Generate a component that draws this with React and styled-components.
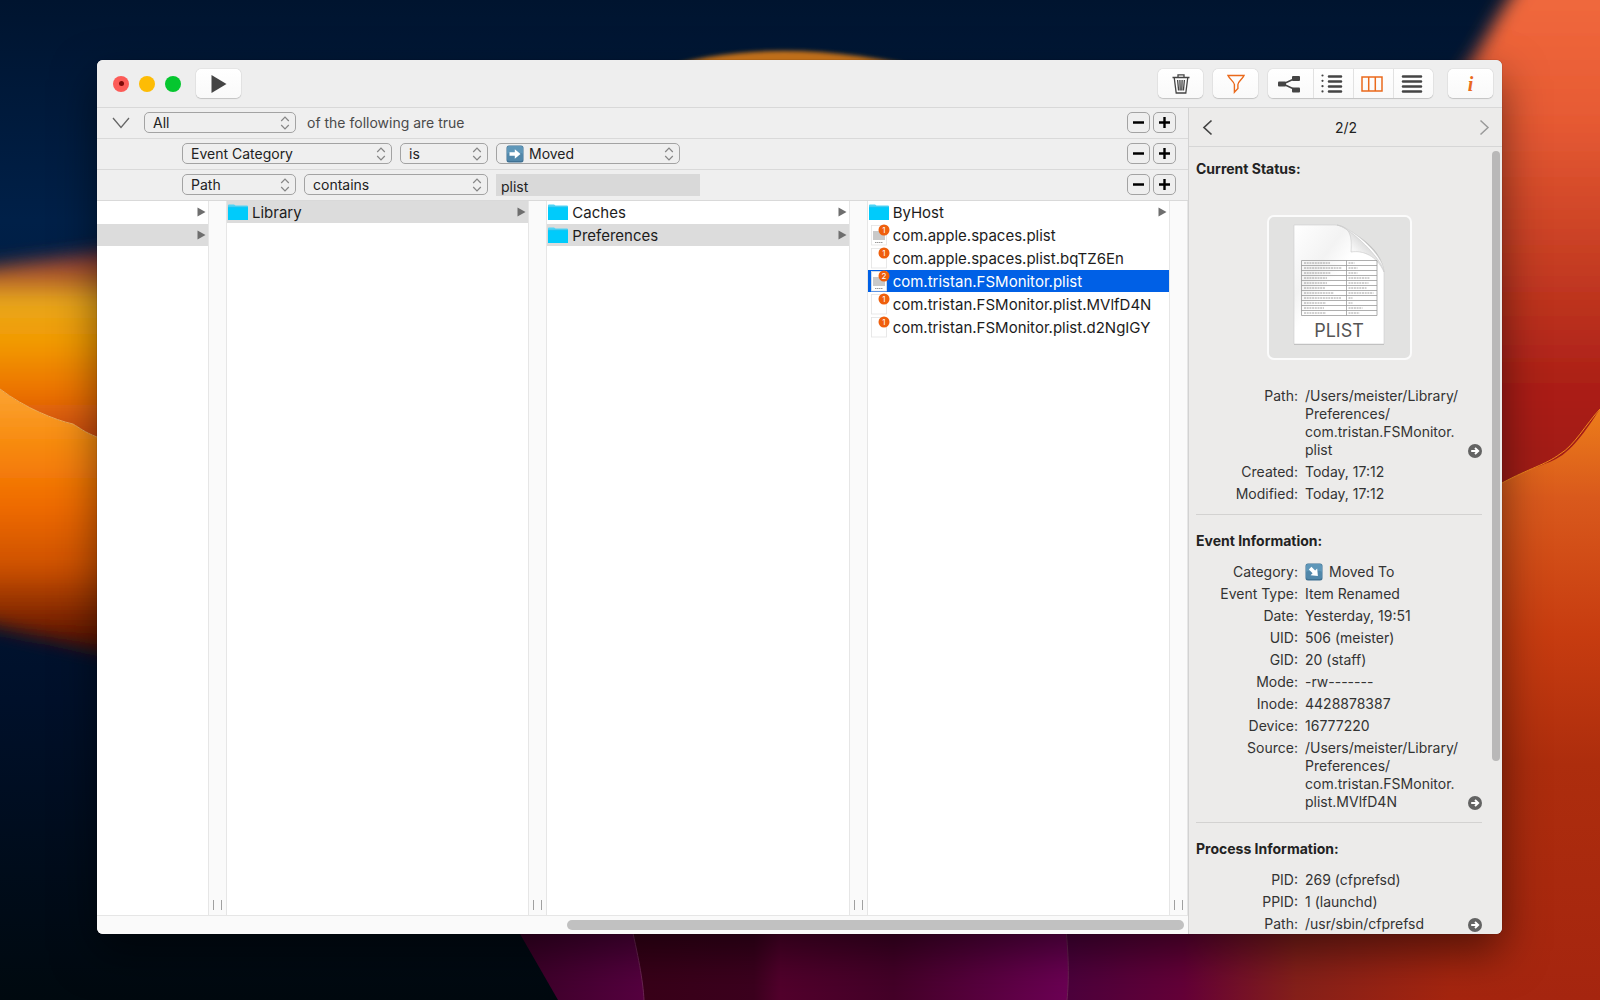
import React from 'react';
import styled, { createGlobalStyle } from 'styled-components';

const GlobalStyle = createGlobalStyle`
  * {
    box-sizing: border-box;
  }
  body {
    margin: 0;
    background: #00122b;
    color: #222;
    font-family: Inter, "Liberation Sans", sans-serif;
    font-size: 14px;
  }
  button, input, select {
    margin: 0;
    padding: 0;
    border: 0;
    background: none;
    color: inherit;
    font: inherit;
  }
  svg {
    display: block;
    flex: none;
  }
`;

const Desktop = styled.div`
  position: relative;
  display: flex;
  height: 100vh;
  min-height: 480px;
  padding: 60px 98px 66px 97px;
`;

const Wallpaper = styled.svg`
  position: absolute;
  inset: 0;
  width: 100%;
  height: 100%;
`;

const Window = styled.main`
  position: relative;
  display: flex;
  flex: 1;
  flex-direction: column;
  min-width: 0;
  overflow: hidden;
  border-radius: 6px;
  background: #efefef;
  box-shadow: 0 0 1px rgba(0, 0, 0, 0.6), 0 18px 44px rgba(0, 0, 0, 0.5);
`;

const Toolbar = styled.header`
  display: flex;
  flex: none;
  align-items: center;
  height: 48px;
  padding: 0 9px 0 16px;
  border-bottom: 1px solid #d8d8d8;
  background: #eeeeee;
`;

const Lights = styled.div`
  display: flex;
  gap: 10px;
  margin-right: 15px;
`;

const Light = styled.button`
  display: flex;
  align-items: center;
  justify-content: center;
  width: 16px;
  height: 16px;
  border-radius: 50%;
  background: ${(props) => props.$color};

  &::after {
    content: '';
    width: 5px;
    height: 5px;
    border-radius: 50%;
    background: ${(props) => (props.$edited ? '#7d0a08' : 'transparent')};
  }
`;

const ToolButton = styled.button`
  display: flex;
  align-items: center;
  justify-content: center;
  width: ${(props) => (props.$narrow ? 40 : 45)}px;
  height: 29px;
  border-radius: 5px;
  background: linear-gradient(#fff, #f9f9f9);
  box-shadow: 0 0 1px rgba(0, 0, 0, 0.35), 0 1px 1px rgba(0, 0, 0, 0.15);
  color: ${(props) => (props.$active ? '#ea6a1c' : '#444')};
`;

const Tools = styled.div`
  display: flex;
  gap: 10px;
  margin-left: auto;
`;

const Segments = styled.div`
  display: flex;
  margin-right: 5px;
  border-radius: 5px;
  box-shadow: 0 0 1px rgba(0, 0, 0, 0.35), 0 1px 1px rgba(0, 0, 0, 0.15);

  ${ToolButton} {
    padding-right: 3px;
    border-radius: 0;
    border-left: 1px solid #e2e2e2;
    box-shadow: none;
  }
  ${ToolButton}:first-child {
    border-left: 0;
    border-radius: 5px 0 0 5px;
  }
  ${ToolButton}:last-child {
    border-radius: 0 5px 5px 0;
  }
`;

const InfoGlyph = styled.span`
  font-family: "Liberation Serif", serif;
  font-size: 20px;
  font-style: italic;
  font-weight: bold;
  line-height: 20px;
`;

const Body = styled.div`
  display: flex;
  flex: 1;
  min-height: 0;
`;

const Main = styled.section`
  display: flex;
  flex: 1;
  flex-direction: column;
  min-width: 0;
`;

const Rule = styled.div`
  display: flex;
  flex: none;
  align-items: center;
  gap: 8px;
  height: 31px;
  padding: 0 12px 1px ${(props) => (props.$nested ? 85 : 15)}px;
  border-bottom: 1px solid #d9d9d9;
`;

const Disclosure = styled.button`
  width: 24px;
  color: #666;
`;

const Phrase = styled.span`
  padding-left: 3px;
  color: #4a4a4a;
`;

const Popup = styled.label`
  display: grid;
  align-items: center;
  width: ${(props) => props.$width}px;
  height: 21px;

  & > * {
    grid-area: 1 / 1;
  }
  & > svg {
    pointer-events: none;
  }
  & > svg:last-child {
    justify-self: end;
    margin-right: 6px;
  }
  & > svg:not(:last-child) {
    margin-left: 10px;
  }
`;

const Select = styled.select`
  width: 100%;
  height: 21px;
  padding-left: ${(props) => (props.$icon ? 32 : 8)}px;
  border: 1px solid #a3a3a3;
  border-radius: 5px;
  appearance: none;
  line-height: 19px;
`;

const TextField = styled.input`
  width: 204px;
  height: 22px;
  padding: 4px 5px 0;
  border-radius: 0;
  background: #d9d9d9;
`;

const RuleButtons = styled.div`
  display: flex;
  gap: 3px;
  margin-left: auto;
`;

const RuleButton = styled.button`
  display: flex;
  align-items: center;
  justify-content: center;
  width: 23px;
  height: 21px;
  border: 1px solid #a3a3a3;
  border-radius: 5px;
  color: #000;
`;

const Browser = styled.div`
  display: flex;
  flex: 1;
  min-height: 0;
  overflow: hidden;
  background: #fff;
`;

const Column = styled.ul`
  display: flex;
  flex: ${(props) => (props.$first ? '0 0 111px' : '1 1 0')};
  flex-direction: column;
  gap: 1px;
  min-width: 0;
  margin: 0;
  padding: 0;
  list-style: none;
`;

const Entry = styled.button`
  display: flex;
  align-items: center;
  width: 100%;
  height: 22px;
  padding-right: 2px;
  background: ${(props) => (props.$state === 'open' ? '#dcdcdc' : props.$state === 'selected' ? '#0060e6' : 'none')};
  color: ${(props) => (props.$state === 'selected' ? '#fff' : '#1c1c1c')};
  font-size: 15px;
  line-height: 22px;
  text-align: left;
  white-space: nowrap;

  & > svg:last-child {
    margin-left: auto;
  }
`;

const EntryName = styled.span`
  padding: 1px 0 0 1px;
`;

const Gutter = styled.div`
  display: flex;
  flex: none;
  align-items: flex-end;
  justify-content: center;
  width: 19px;
  padding-bottom: 5px;
  border: solid #e6e6e6;
  border-width: 0 1px;
  background: #fafafa;

  &::after {
    content: '';
    width: 7px;
    height: 10px;
    border: solid #a0a0a0;
    border-width: 0 1px;
  }
`;

const BottomTrack = styled.div`
  display: flex;
  flex: none;
  justify-content: flex-end;
  height: 19px;
  padding: 4px 4px 0;
  border-top: 1px solid #e6e6e6;
  background: #fafafa;
`;

const BottomThumb = styled.div`
  width: 57%;
  height: 10px;
  border-radius: 5px;
  background: #c1c1c1;
`;

const Inspector = styled.aside`
  display: flex;
  flex: 0 0 314px;
  flex-direction: column;
  border-left: 1px solid #d2d2d2;
  background: #ecebea;
`;

const Pager = styled.nav`
  display: flex;
  flex: none;
  align-items: center;
  justify-content: space-between;
  height: 39px;
  padding: 0 12px 0 13px;
  border-bottom: 1px solid #d6d6d6;
`;

const PagerButton = styled.button`
  color: ${(props) => (props.disabled ? '#9a9a9a' : '#444')};
`;

const Scroller = styled.div`
  display: flex;
  flex: 1;
  min-height: 0;
  overflow: hidden;
`;

const Details = styled.div`
  flex: 1;
  min-width: 0;
  padding: 12px 10px 0 7px;
`;

const SideThumb = styled.div`
  flex: none;
  width: 8px;
  height: 77.5%;
  margin: 4px 2px 0 0;
  border-radius: 4px;
  background: #b9b8b8;
`;

const Heading = styled.h2`
  margin: 0;
  font-size: 14px;
  font-weight: 700;
  line-height: 20px;
`;

const Preview = styled.div`
  display: flex;
  align-items: center;
  justify-content: center;
  width: 145px;
  height: 145px;
  margin: 36px auto 27px;
  padding-bottom: 5px;
  border: 2px solid #fbfbfb;
  border-radius: 7px;
  background: #e2e2e1;
`;

const Facts = styled.dl`
  display: grid;
  grid-template-columns: 102px 1fr auto;
  row-gap: 4px;
  margin: ${(props) => (props.$spaced ? 12 : 0)}px 0 0;
  line-height: 18px;
`;

const Label = styled.dt`
  grid-column: 1;
  text-align: right;
  color: #333;
`;

const Value = styled.dd`
  display: flex;
  grid-column: 2;
  align-items: center;
  gap: 6px;
  margin: 0 0 0 7px;
  color: #333;
  white-space: pre-line;
`;

const Reveal = styled.button`
  grid-column: 3;
  align-self: end;
  height: 17px;
`;

const Divider = styled.hr`
  margin: 11px 0 16px;
  border: 0;
  border-top: 1px solid #d3d2d1;
`;

function Background() {
  return (
    <Wallpaper viewBox="0 0 1600 1000" preserveAspectRatio="none" aria-hidden="true">
      <defs>
        <linearGradient id="night" x1="0" y1="0" x2="0" y2="1">
          <stop offset="0" stopColor="#00142f" />
          <stop offset="0.22" stopColor="#002048" />
          <stop offset="0.7" stopColor="#00102a" />
          <stop offset="1" stopColor="#00090f" />
        </linearGradient>
        <linearGradient id="gold" x1="0" y1="250" x2="0" y2="435" gradientUnits="userSpaceOnUse">
          <stop offset="0" stopColor="#7a3040" />
          <stop offset="0.12" stopColor="#a8502c" />
          <stop offset="0.28" stopColor="#e8a81c" />
          <stop offset="0.5" stopColor="#f39a00" />
          <stop offset="0.8" stopColor="#ea6d04" />
          <stop offset="1" stopColor="#c94a10" />
        </linearGradient>
        <linearGradient id="amber" x1="0" y1="390" x2="0" y2="640" gradientUnits="userSpaceOnUse">
          <stop offset="0" stopColor="#fba332" />
          <stop offset="0.2" stopColor="#f88c10" />
          <stop offset="0.45" stopColor="#f06c00" />
          <stop offset="0.7" stopColor="#cf5200" />
          <stop offset="1" stopColor="#5c1206" />
        </linearGradient>
        <linearGradient id="coral" x1="0" y1="0" x2="0" y2="480" gradientUnits="userSpaceOnUse">
          <stop offset="0" stopColor="#f0683c" />
          <stop offset="0.25" stopColor="#e65a33" />
          <stop offset="0.55" stopColor="#c53c22" />
          <stop offset="0.8" stopColor="#ab1f17" />
          <stop offset="1" stopColor="#a01c17" />
        </linearGradient>
        <linearGradient id="rust" x1="0" y1="410" x2="0" y2="1000" gradientUnits="userSpaceOnUse">
          <stop offset="0" stopColor="#ec7c1a" />
          <stop offset="0.15" stopColor="#d9591c" />
          <stop offset="0.38" stopColor="#c73c10" />
          <stop offset="0.6" stopColor="#ad2d0d" />
          <stop offset="1" stopColor="#a5250f" />
        </linearGradient>
        <linearGradient id="wine" x1="515" y1="0" x2="645" y2="0" gradientUnits="userSpaceOnUse">
          <stop offset="0" stopColor="#3a0026" />
          <stop offset="1" stopColor="#560040" />
        </linearGradient>
        <linearGradient id="berry" x1="632" y1="0" x2="1068" y2="0" gradientUnits="userSpaceOnUse">
          <stop offset="0" stopColor="#380018" />
          <stop offset="0.28" stopColor="#3c001e" />
          <stop offset="0.34" stopColor="#52002c" />
          <stop offset="0.6" stopColor="#440028" />
          <stop offset="1" stopColor="#6c0054" />
        </linearGradient>
        <linearGradient id="ember" x1="1066" y1="0" x2="1450" y2="0" gradientUnits="userSpaceOnUse">
          <stop offset="0" stopColor="#4c003c" />
          <stop offset="0.3" stopColor="#640038" />
          <stop offset="0.6" stopColor="#86201a" />
          <stop offset="1" stopColor="#a5250f" />
        </linearGradient>
        <filter id="soft" x="-20%" y="-20%" width="140%" height="140%">
          <feGaussianBlur stdDeviation="9" />
        </filter>
        <filter id="haze" x="-10%" y="-50%" width="120%" height="200%">
          <feGaussianBlur stdDeviation="2" />
        </filter>
        <clipPath id="upperDune">
          <path d="M0 200H200V480L97 437C84 432 80 428 73 424C55 420 25 408 0 389Z" />
        </clipPath>
        <clipPath id="lowerDune">
          <path d="M0 389C25 408 55 420 73 424C80 428 84 432 97 437L200 480V800H0Z" />
        </clipPath>
      </defs>
      <rect width="1600" height="1000" fill="url(#night)" />
      <g clipPath="url(#upperDune)">
        <path d="M-40 272C20 262 60 258 140 246V500H-40Z" fill="url(#gold)" filter="url(#soft)" />
      </g>
      <g clipPath="url(#lowerDune)">
        <path d="M-40 350H180V668C120 654 60 644 -40 616Z" fill="url(#amber)" filter="url(#soft)" />
      </g>
      <path d="M0 389C25 408 55 420 73 424C80 428 84 432 97 437" fill="none" stroke="#f5ad55" />
      <path d="M650 72C730 44 830 44 940 72Z" fill="#d0781c" filter="url(#haze)" />
      <path d="M1440 100C1480 60 1490 20 1530 -30H1650V520H1440Z" fill="url(#coral)" filter="url(#soft)" />
      <path d="M512 920L558 1000H660V920Z" fill="url(#wine)" />
      <path d="M630 920C638 955 643 980 644 1000H1080V920Z" fill="url(#berry)" />
      <path d="M1065 920C1069 955 1069 980 1067 1000H1460V920Z" fill="url(#ember)" />
      <path d="M630 920C638 955 643 980 644 1000M1065 920C1069 955 1069 980 1067 1000" fill="none" stroke="#6b2452" />
      <path d="M1450 506L1502 483C1530 468 1545 465 1556 459C1574 450 1590 424 1600 409V1000H1450Z" fill="url(#rust)" />
      <path d="M1502 483C1530 468 1545 465 1560 454C1574 446 1586 424 1600 409" fill="none" stroke="#f08a1c" />
    </Wallpaper>
  );
}

function Chevrons() {
  return (
    <svg width="10" height="14" viewBox="0 0 10 14" fill="none" stroke="#858585" strokeWidth="1.2">
      <path d="M1.2 5L5 1.2 8.8 5M1.2 9L5 12.8 8.8 9" />
    </svg>
  );
}

function ArrowTile({ angle = 0 }) {
  return (
    <svg width="18" height="18" viewBox="0 0 18 18">
      <rect x="0.5" y="0.5" width="17" height="17" rx="2.5" fill="#3f7193" />
      <rect x="1" y="1" width="16" height="14" rx="2" fill="#5f97b9" />
      <rect x="1" y="8" width="16" height="8" rx="2" fill="#5187aa" />
      <path d="M3.5 7.2H8.8V4.3L14.5 9 8.8 13.7V10.8H3.5Z" fill="#fff" transform={`rotate(${angle} 9 9)`} />
    </svg>
  );
}

function FolderIcon() {
  return (
    <svg width="24" height="22" viewBox="0 0 24 22">
      <path d="M1 4.5Q1 3.5 2 3.5H7L8.5 4.5H20Q21 4.5 21 5.5V8H1Z" fill="#4fd5f7" />
      <rect x="1" y="6" width="20" height="13" rx="0.5" fill="#00cbfb" />
      <path d="M1 6H21" stroke="#35bfe6" strokeWidth="0.6" />
    </svg>
  );
}

function FileIcon({ count, plist }) {
  return (
    <svg width="24" height="22" viewBox="0 0 24 22">
      <rect x="3.5" y="1.5" width="15" height="19.5" fill="#fff" stroke="#e3e3e3" strokeWidth="0.8" />
      {plist && <path d="M5 7H17V16H5Z" fill="#c9c9c9" />}
      {plist && <path d="M7 18.5H15" stroke="#9a9a9a" strokeDasharray="1.5 0.5" />}
      <circle cx="16" cy="6" r="5.5" fill="#ef5f0c" />
      <text x="16" y="9" textAnchor="middle" fontSize="8" fill="#fff">
        {count}
      </text>
    </svg>
  );
}

function Triangle() {
  return (
    <svg width="9" height="10" viewBox="0 0 9 10">
      <path d="M0.5 0.5L8.5 5 0.5 9.5Z" fill="#6e6e6e" />
    </svg>
  );
}

function RevealIcon() {
  return (
    <svg width="14" height="14" viewBox="0 0 14 14">
      <circle cx="7" cy="7" r="7" fill="#636363" />
      <path d="M3.2 7H9.5M7 4L10.2 7 7 10" fill="none" stroke="#fff" strokeWidth="1.9" />
    </svg>
  );
}

// dash lengths of the key and the value in each line of the document
const plistRows = [
  [26, 6], [38, 9], [27, 9], [23, 21], [23, 20], [21, 18], [30, 25], [37, 4], [22, 4], [20, 14], [22, 11],
];

function PlistDocument() {
  return (
    <svg width="96" height="122" viewBox="0 2 96 122">
      <defs>
        <linearGradient id="paper" x1="0" y1="0" x2="1" y2="1">
          <stop offset="0" stopColor="#fff" />
          <stop offset="0.3" stopColor="#f3f3f3" />
          <stop offset="0.45" stopColor="#fff" />
        </linearGradient>
        <linearGradient id="curl" x1="0" y1="1" x2="0.7" y2="0.3">
          <stop offset="0" stopColor="#fff" />
          <stop offset="0.6" stopColor="#f6f6f6" />
          <stop offset="1" stopColor="#cfcfcf" />
        </linearGradient>
      </defs>
      <path d="M3 4H40C58 4 92 26 93 50V123H3Z" fill="#000" opacity="0.16" />
      <path d="M3 3H44C58 3 93 32 93 50V122H3Z" fill="url(#paper)" stroke="#cfcfcf" strokeWidth="0.6" />
      <path d="M46 3C60 5 61 16 60 30C72 28 86 34 93 50C92 38 60 6 46 3Z" fill="url(#curl)" stroke="#c9c9c9" strokeWidth="0.6" />
      <g stroke="#9a9a9a" strokeWidth="0.8" fill="none">
        <path d="M10.5 38.5H86V93.5H10.5ZM55.5 38.5V93.5" />
        {plistRows.map(([key, value], i) => (
          <g key={i}>
            {i > 0 && <path d={`M10.5 ${38.5 + i * 5}H86`} />}
            <path d={`M13 ${41 + i * 5}h${key}M57.5 ${41 + i * 5}h${value}`} stroke="#888" strokeDasharray="2 0.7" />
          </g>
        ))}
      </g>
      <text x="48" y="115" textAnchor="middle" fontSize="18" fill="#555">
        PLIST
      </text>
    </svg>
  );
}

function PopupMenu({ label, value, width, icon }) {
  return (
    <Popup $width={width}>
      <Select aria-label={label} defaultValue={value} $icon={icon}>
        <option>{value}</option>
      </Select>
      {icon && <ArrowTile />}
      <Chevrons />
    </Popup>
  );
}

function AddRemove() {
  return (
    <RuleButtons>
      <RuleButton aria-label="Remove rule">
        <svg width="11" height="11" viewBox="0 0 11 11" stroke="currentColor" strokeWidth="2.4">
          <path d="M0 5.5H11" />
        </svg>
      </RuleButton>
      <RuleButton aria-label="Add rule">
        <svg width="11" height="11" viewBox="0 0 11 11" stroke="currentColor" strokeWidth="2.4">
          <path d="M0 5.5H11M5.5 0V11" />
        </svg>
      </RuleButton>
    </RuleButtons>
  );
}

function BrowserColumn({ label, items, first }) {
  return (
    <>
      <Column aria-label={label} $first={first}>
        {items.map((item, i) => (
          <li key={i}>
            <Entry $state={item.state} aria-label={item.name ? undefined : 'Folder'}>
              {item.name && (item.folder ? <FolderIcon /> : <FileIcon count={item.count} plist={item.plist} />)}
              {item.name && <EntryName>{item.name}</EntryName>}
              {item.folder && <Triangle />}
            </Entry>
          </li>
        ))}
      </Column>
      <Gutter />
    </>
  );
}

function FactList({ facts, spaced }) {
  return (
    <Facts $spaced={spaced}>
      {facts.map(({ label, value, reveal, icon }) => (
        <React.Fragment key={label}>
          <Label>{label}:</Label>
          <Value>
            {icon && <ArrowTile angle={45} />}
            {value}
          </Value>
          {reveal && (
            <Reveal aria-label={`Reveal ${label}`}>
              <RevealIcon />
            </Reveal>
          )}
        </React.Fragment>
      ))}
    </Facts>
  );
}

const columns = [
  [{ folder: true }, { folder: true, state: 'open' }],
  [{ name: 'Library', folder: true, state: 'open' }],
  [
    { name: 'Caches', folder: true },
    { name: 'Preferences', folder: true, state: 'open' },
  ],
  [
    { name: 'ByHost', folder: true },
    { name: 'com.apple.spaces.plist', count: 1, plist: true },
    { name: 'com.apple.spaces.plist.bqTZ6En', count: 1 },
    { name: 'com.tristan.FSMonitor.plist', count: 2, plist: true, state: 'selected' },
    { name: 'com.tristan.FSMonitor.plist.MVlfD4N', count: 1 },
    { name: 'com.tristan.FSMonitor.plist.d2NgIGY', count: 1 },
  ],
];

const statusFacts = [
  { label: 'Path', value: '/Users/meister/Library/\nPreferences/\ncom.tristan.FSMonitor.\nplist', reveal: true },
  { label: 'Created', value: 'Today, 17:12' },
  { label: 'Modified', value: 'Today, 17:12' },
];

const eventFacts = [
  { label: 'Category', value: 'Moved To', icon: true },
  { label: 'Event Type', value: 'Item Renamed' },
  { label: 'Date', value: 'Yesterday, 19:51' },
  { label: 'UID', value: '506 (meister)' },
  { label: 'GID', value: '20 (staff)' },
  { label: 'Mode', value: '-rw-------' },
  { label: 'Inode', value: '4428878387' },
  { label: 'Device', value: '16777220' },
  { label: 'Source', value: '/Users/meister/Library/\nPreferences/\ncom.tristan.FSMonitor.\nplist.MVlfD4N', reveal: true },
];

const processFacts = [
  { label: 'PID', value: '269 (cfprefsd)' },
  { label: 'PPID', value: '1 (launchd)' },
  { label: 'Path', value: '/usr/sbin/cfprefsd', reveal: true },
];

function WindowToolbar() {
  return (
    <Toolbar>
      <Lights>
        <Light aria-label="Close" $color="#fc5b57" $edited />
        <Light aria-label="Minimize" $color="#fdbc05" />
        <Light aria-label="Zoom" $color="#05c62f" />
      </Lights>
      <ToolButton aria-label="Start monitoring">
        <svg width="16" height="18" viewBox="0 0 16 18">
          <path d="M0.5 0L15.5 9 0.5 18Z" fill="currentColor" />
        </svg>
      </ToolButton>
      <Tools>
        <ToolButton aria-label="Clear">
          <svg width="18" height="20" viewBox="0 0 18 20" fill="none" stroke="currentColor" strokeWidth="1.3">
            <path d="M0.5 3.5H17.5M6 3.5V0.8H12V3.5M2.2 3.5L4.2 19H13.8L15.8 3.5M5.6 6L6.6 16.5M7.9 6L8.2 16.5M10.1 6L9.8 16.5M12.4 6L11.4 16.5" />
          </svg>
        </ToolButton>
        <ToolButton aria-label="Filter" $active>
          <svg width="18" height="20" viewBox="0 0 18 20" fill="none" stroke="currentColor" strokeWidth="1.4">
            <path d="M1 1.5H17C15.5 5 11.3 7.5 10.9 10.5V14.5L7.4 18.2V10.5C7 7.5 2.5 5 1 1.5Z" />
          </svg>
        </ToolButton>
        <Segments>
          <ToolButton aria-label="Tree view">
            <svg width="22" height="18" viewBox="0 0 22 18" fill="currentColor">
              <path d="M5 9L17 3.5M5 9L17 14.5" stroke="currentColor" strokeWidth="1.4" />
              <rect x="0" y="6.5" width="8" height="5" rx="1" />
              <rect x="14" y="1" width="8" height="5" rx="1" />
              <rect x="14" y="12.5" width="8" height="5" rx="1" />
            </svg>
          </ToolButton>
          <ToolButton aria-label="Outline view" $narrow>
            <svg width="22" height="20" viewBox="0 0 22 20" stroke="currentColor" strokeWidth="2.6" strokeLinecap="round">
              <path d="M8 2.5H20M8 7.5H20M8 12.5H20M8 17.5H20" />
              <path d="M1.5 1.5V19" strokeWidth="2.2" strokeDasharray="0.01 5.3" />
            </svg>
          </ToolButton>
          <ToolButton aria-label="Column view" $narrow $active>
            <svg width="22" height="16" viewBox="0 0 22 16" fill="none" stroke="currentColor" strokeWidth="1.5">
              <path d="M1 1H21V15H1ZM7.7 1V15M14.3 1V15" />
            </svg>
          </ToolButton>
          <ToolButton aria-label="List view" $narrow>
            <svg width="22" height="20" viewBox="0 0 22 20" stroke="currentColor" strokeWidth="2.6" strokeLinecap="round">
              <path d="M2 2.5H20M2 7.5H20M2 12.5H20M2 17.5H20" />
            </svg>
          </ToolButton>
        </Segments>
        <ToolButton aria-label="Inspector" $active>
          <InfoGlyph>i</InfoGlyph>
        </ToolButton>
      </Tools>
    </Toolbar>
  );
}

function InspectorPanel() {
  return (
    <Inspector>
      <Pager aria-label="Events">
        <PagerButton aria-label="Previous event">
          <svg width="11" height="17" viewBox="0 0 11 17" fill="none" stroke="currentColor" strokeWidth="1.7">
            <path d="M9.5 1.5L2 8.5 9.5 15.5" />
          </svg>
        </PagerButton>
        2/2
        <PagerButton aria-label="Next event" disabled>
          <svg width="11" height="17" viewBox="0 0 11 17" fill="none" stroke="currentColor" strokeWidth="1.5">
            <path d="M1.5 1.5L9 8.5 1.5 15.5" />
          </svg>
        </PagerButton>
      </Pager>
      <Scroller>
        <Details>
          <Heading>Current Status:</Heading>
          <Preview>
            <PlistDocument />
          </Preview>
          <FactList facts={statusFacts} />
          <Divider />
          <Heading>Event Information:</Heading>
          <FactList facts={eventFacts} spaced />
          <Divider />
          <Heading>Process Information:</Heading>
          <FactList facts={processFacts} spaced />
        </Details>
        <SideThumb />
      </Scroller>
    </Inspector>
  );
}

function App() {
  return (
    <>
      <GlobalStyle />
      <Desktop>
        <Background />
        <Window>
          <WindowToolbar />
          <Body>
            <Main>
              <Rule>
                <Disclosure aria-label="Collapse rules">
                  <svg width="18" height="12" viewBox="0 0 18 12" fill="none" stroke="currentColor" strokeWidth="1.3">
                    <path d="M1 1L9 10.5 17 1" />
                  </svg>
                </Disclosure>
                <PopupMenu label="Match" value="All" width={152} />
                <Phrase>of the following are true</Phrase>
                <AddRemove />
              </Rule>
              <Rule $nested>
                <PopupMenu label="Attribute" value="Event Category" width={210} />
                <PopupMenu label="Operator" value="is" width={88} />
                <PopupMenu label="Category" value="Moved" width={184} icon />
                <AddRemove />
              </Rule>
              <Rule $nested>
                <PopupMenu label="Attribute" value="Path" width={114} />
                <PopupMenu label="Operator" value="contains" width={184} />
                <TextField aria-label="Path text" defaultValue="plist" />
                <AddRemove />
              </Rule>
              <Browser>
                {columns.map((items, i) => (
                  <BrowserColumn key={i} label={`Level ${i + 1}`} items={items} first={i === 0} />
                ))}
              </Browser>
              <BottomTrack>
                <BottomThumb />
              </BottomTrack>
            </Main>
            <InspectorPanel />
          </Body>
        </Window>
      </Desktop>
    </>
  );
}

export default App;
